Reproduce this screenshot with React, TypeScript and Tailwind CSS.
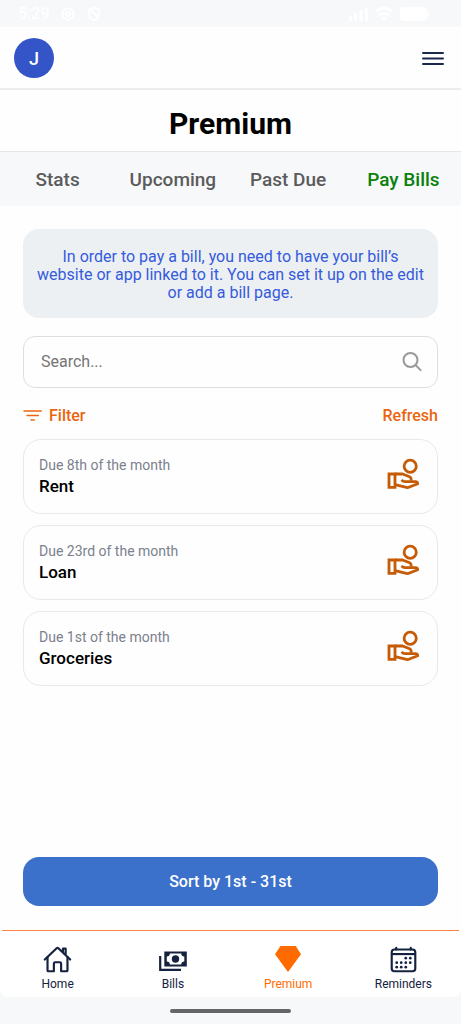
import type { ReactNode } from "react";
import { IoCalendarOutline, IoHomeOutline } from "react-icons/io5";

const bills = [
  { name: "Rent", due: "Due 8th of the month" },
  { name: "Loan", due: "Due 23rd of the month" },
  { name: "Groceries", due: "Due 1st of the month" },
];

const tabs = ["Stats", "Upcoming", "Past Due", "Pay Bills"];

function StatusBar() {
  return (
    <div className="flex h-[27px] shrink-0 items-center bg-[#f7f8fa] pr-8 pl-[18px] text-white">
      <span className="text-base leading-5 font-medium">5:29</span>
      <svg className="ml-2.5 size-4" viewBox="0 0 16 16" fill="none" stroke="currentColor" strokeWidth="2" aria-hidden="true">
        <circle cx="8" cy="8" r="5.500" />
        <circle cx="8" cy="8" r="2" />
        <path d="M8 1v2M8 13v2M1.900 4.500l1.800 1M12.300 10.500l1.800 1M1.900 11.500l1.800-1M12.300 5.500l1.800-1" />
      </svg>
      <svg className="ml-2.5 size-4" viewBox="0 0 16 16" fill="none" stroke="currentColor" strokeWidth="2" aria-hidden="true">
        <path d="M8 1.800 2.900 3.700V8c0 3 2.200 5.200 5.100 6.300 2.900-1.100 5.100-3.300 5.100-6.300V3.700zM4 3.500l8.500 8" />
      </svg>
      <svg className="ml-auto h-4 w-20" viewBox="0 0 80 16" fill="currentColor" aria-hidden="true">
        <rect x="0" y="10" width="3" height="5" rx="1" />
        <rect x="5" y="7" width="3" height="8" rx="1" />
        <rect x="10.500" y="4" width="3" height="11" rx="1" />
        <rect x="16" y="2" width="3" height="13" rx="1" />
        <g fill="none" stroke="currentColor" strokeWidth="2.600">
          <path d="M26.500 5.500c5-4.500 12-4.500 17 0" />
          <path d="M30 9.500c3-2.600 7-2.600 10 0" />
        </g>
        <path d="M32.500 12.200c1.500-1.200 3.500-1.200 5 0L35 15z" />
        <rect x="51" y="1" width="27" height="14" rx="4" />
        <rect x="78.500" y="5" width="1.500" height="6" rx=".7" />
      </svg>
    </div>
  );
}

function SearchIcon() {
  return (
    <svg className="size-5" viewBox="0 0 20 20" fill="none" stroke="#999999" strokeWidth="2" strokeLinecap="round" aria-hidden="true">
      <circle cx="8.500" cy="8" r="7" />
      <path d="m13.600 13.100 5 5" />
    </svg>
  );
}

function PayIcon() {
  return (
    <svg className="h-9 w-8" viewBox="0 0 32 36" fill="none" stroke="#c65a05" strokeWidth="2.800" strokeLinejoin="round" aria-hidden="true">
      <circle cx="23.200" cy="8.200" r="6.100" />
      <path strokeLinejoin="miter" d="M2 16h6v13.300H2z" />
      <path d="M8 16h7.600l7 2.800c1.500.6 1.900 2.100 1.200 3.800" />
      <path d="M14.600 21.900c.8 1 2 1.700 3.400 1.700h10.500c1.400 0 2.100.9 2.200 2.100L20.500 29.700 8 26.600" />
    </svg>
  );
}

function CashIcon() {
  return (
    <svg className="h-6 w-7" viewBox="0 0 28 24" aria-hidden="true">
      <path d="M1.200 9v13.800H22" fill="none" stroke="#14213f" strokeWidth="2.200" />
      <path d="M5.300 4.500H27.800v15h-22.500z" fill="#14213f" />
      <path d="M10.800 6.500h11.500a3 3 0 0 0 3 3v5a3 3 0 0 0-3 3h-11.500a3 3 0 0 0-3-3v-5a3 3 0 0 0 3-3z" fill="#fff" />
      <circle cx="16.500" cy="12" r="3.700" fill="#14213f" />
    </svg>
  );
}

function NavItem({ label, active, children }: { label: string; active?: boolean; children: ReactNode }) {
  return (
    <a
      href={"#" + label.toLowerCase()}
      aria-current={active ? "page" : undefined}
      className={"flex flex-col items-center gap-[3px] pt-3.5 text-xs leading-4 " + (active ? "text-[#ff6b00]" : "text-[#14213f]")}
    >
      <span className="flex h-7 items-center">{children}</span>
      {label}
    </a>
  );
}

export default function App() {
  return (
    <div className="flex min-h-screen flex-col bg-[#fefefe] font-[Roboto,sans-serif] text-black">
      <StatusBar />
      <header className="flex h-[63px] shrink-0 items-center justify-between border-b-2 border-[#ececec] pr-4 pl-3.5">
        <button className="flex size-10 items-center justify-center rounded-full bg-[#3355c8] pt-0.5 text-lg font-medium text-white" aria-label="Account">
          J
        </button>
        <button className="flex" aria-label="Open menu">
          <svg className="h-4 w-6" viewBox="0 0 24 16" stroke="#1c2849" strokeWidth="2" strokeLinecap="round" aria-hidden="true">
            <path d="M2 3h20M2 8.500h20M2 14h20" />
          </svg>
        </button>
      </header>

      <div className="flex h-[62px] shrink-0 items-center justify-center border-b border-[#e6e6e6] pt-1.5">
        <h1 className="text-[30px] leading-9 font-bold">Premium</h1>
      </div>

      <nav className="grid h-[54px] shrink-0 grid-cols-4 bg-[#f7f8fa] pt-0.5 text-[19px] font-medium" aria-label="Premium sections">
        {tabs.map((tab) => (
          <button key={tab} className={"whitespace-nowrap " + (tab === "Pay Bills" ? "text-[#0b800b]" : "text-[#5b5b5b]")}>
            {tab}
          </button>
        ))}
      </nav>

      <main className="flex grow flex-col px-[23px] pt-[23px] pb-6">
        <p className="rounded-2xl bg-[#ecf0f3] px-3 pt-[19px] pb-4 text-center text-base leading-[18px] text-[#355bdc]">
          In order to pay a bill, you need to have your bill’s website or app linked to it. You can set it up on the edit or add a bill page.
        </p>

        <label className="mt-[18px] flex h-[52px] items-center rounded-xl border border-[#dedede] pr-[15px] pl-[17px]">
          <input
            type="search"
            aria-label="Search bills"
            placeholder="Search..."
            className="min-w-0 grow bg-transparent text-base outline-none placeholder:text-[#757575]"
          />
          <SearchIcon />
        </label>

        <div className="flex h-[51px] items-center justify-between pt-1 text-base font-medium text-[#eb650f]">
          <button className="flex items-center gap-[7px]">
            <svg className="h-3 w-[19px]" viewBox="0 0 19 12" stroke="currentColor" strokeWidth="1.400" strokeLinecap="round" aria-hidden="true">
              <path d="M1 1h17.300M4 5.500h11.300M8 10h3.300" />
            </svg>
            Filter
          </button>
          <button>Refresh</button>
        </div>

        <ul className="flex flex-col gap-[11px]">
          {bills.map((bill) => (
            <li key={bill.name} className="flex h-[75px] items-center justify-between rounded-[18px] border border-[#e9e9ea] pr-[18px] pb-0.5 pl-[15px]">
              <div>
                <p className="text-sm leading-5 text-[#7b818d]">{bill.due}</p>
                <h2 className="text-[17px] leading-[22px] font-medium">{bill.name}</h2>
              </div>
              <button aria-label={"Pay " + bill.name}>
                <PayIcon />
              </button>
            </li>
          ))}
        </ul>

        <button className="mt-auto h-[49px] rounded-2xl bg-[#3b71ca] text-base font-medium text-white">
          Sort by 1st - 31st
        </button>
      </main>

      <div className="shrink-0 bg-[#f7f8fa]">
        <div className="bg-[#fefefe] px-0.5">
          <div className="h-px bg-[#ff8541]" />
        </div>
        <nav className="grid h-[66px] grid-cols-4 rounded-b-lg bg-white" aria-label="Main">
          <NavItem label="Home">
            <IoHomeOutline className="size-[29px] [&_path]:[stroke-width:38px]" />
          </NavItem>
          <NavItem label="Bills">
            <CashIcon />
          </NavItem>
          <NavItem label="Premium" active>
            <svg className="h-7 w-7" viewBox="0 0 28 28" fill="currentColor" aria-hidden="true">
              <path d="M6.500 1h15.200L27 9.200 14 27 1 9.200z" />
            </svg>
          </NavItem>
          <NavItem label="Reminders">
            <IoCalendarOutline className="size-[29px] [&_path]:[stroke-width:38px] [&_rect]:[stroke-width:38px]" />
          </NavItem>
        </nav>
        <div className="flex h-[27px] items-center justify-center">
          <div className="h-1 w-[121px] rounded-full bg-[#666666]" />
        </div>
      </div>
    </div>
  );
}
